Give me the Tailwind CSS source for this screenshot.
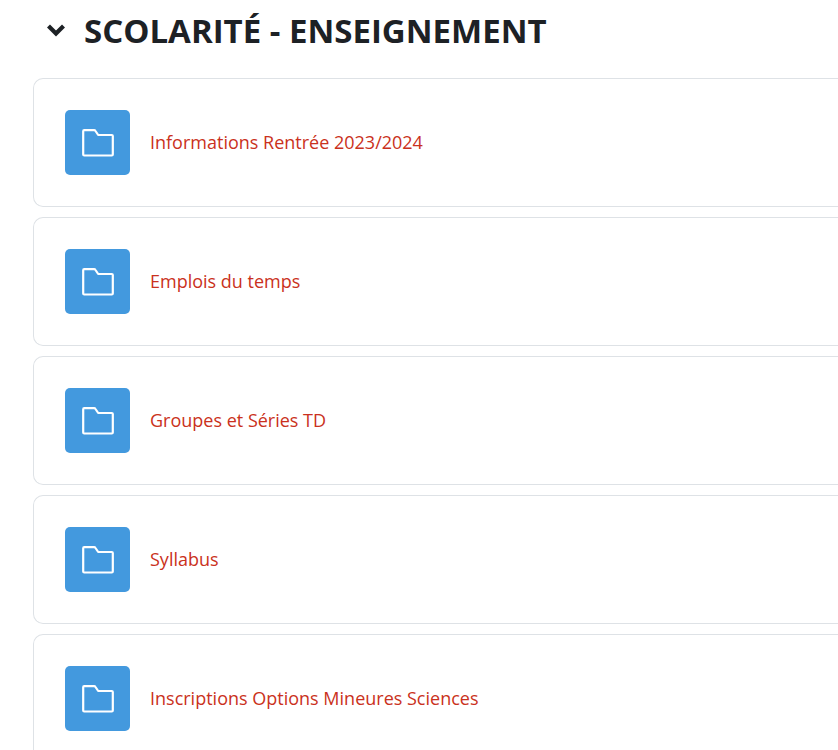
<!DOCTYPE html>
<html lang="fr">
<head>
    <meta charset="UTF-8">
    <meta name="viewport" content="width=device-width, initial-scale=1.0">
    <title>Scolarité - Enseignement</title>
    <script src="https://cdn.jsdelivr.net/npm/@tailwindcss/browser@4"></script>
</head>
<body class="bg-white font-['Segoe_UI','Open_Sans','Noto_Sans',sans-serif] text-[#1d2125]">
    <!-- folder icon shared by every activity -->
    <svg class="hidden" aria-hidden="true">
        <symbol id="folder" viewBox="0 0 32 28">
            <path d="M2.2 1.2h9.8q1 0 1.5.8l2.7 4h13.6q1 0 1 1v18.500q0 1-1 1H2.200q-1 0-1-1V2.200q0-1 1-1z" fill="none" stroke="#fff" stroke-width="2.2" stroke-linejoin="round"/>
        </symbol>
    </svg>

    <main class="pl-[33px]">
        <header class="flex items-center gap-4 pl-[11px] h-[60px] mb-[18px]">
            <button type="button" aria-label="Replier la section" aria-expanded="true" class="w-6 h-6 flex items-center justify-center">
                <svg class="w-5 h-[14px]" viewBox="0 0 20 14" aria-hidden="true">
                    <path d="M2.500 3L10 10.500L17.500 3" fill="none" stroke="#1d2125" stroke-width="4.200"/>
                </svg>
            </button>
            <h1 class="text-[33px] leading-none font-bold whitespace-nowrap">SCOLARITÉ - ENSEIGNEMENT</h1>
        </header>

        <ul class="flex flex-col gap-[10px] text-[18px] text-[#ca3120]">
            <li class="flex items-center gap-5 p-[31px] border border-r-0 border-[#dee2e6] rounded-l-[10px]">
                <span class="w-[65px] h-[65px] shrink-0 rounded-[5px] bg-[#4399de] flex items-center justify-center">
                    <svg class="w-8 h-7"><use href="#folder"/></svg>
                </span>
                <a href="#" class="hover:underline">Informations Rentrée 2023/2024</a>
            </li>
            <li class="flex items-center gap-5 p-[31px] border border-r-0 border-[#dee2e6] rounded-l-[10px]">
                <span class="w-[65px] h-[65px] shrink-0 rounded-[5px] bg-[#4399de] flex items-center justify-center">
                    <svg class="w-8 h-7"><use href="#folder"/></svg>
                </span>
                <a href="#" class="hover:underline">Emplois du temps</a>
            </li>
            <li class="flex items-center gap-5 p-[31px] border border-r-0 border-[#dee2e6] rounded-l-[10px]">
                <span class="w-[65px] h-[65px] shrink-0 rounded-[5px] bg-[#4399de] flex items-center justify-center">
                    <svg class="w-8 h-7"><use href="#folder"/></svg>
                </span>
                <a href="#" class="hover:underline">Groupes et Séries TD</a>
            </li>
            <li class="flex items-center gap-5 p-[31px] border border-r-0 border-[#dee2e6] rounded-l-[10px]">
                <span class="w-[65px] h-[65px] shrink-0 rounded-[5px] bg-[#4399de] flex items-center justify-center">
                    <svg class="w-8 h-7"><use href="#folder"/></svg>
                </span>
                <a href="#" class="hover:underline">Syllabus</a>
            </li>
            <li class="flex items-center gap-5 p-[31px] border border-r-0 border-[#dee2e6] rounded-l-[10px]">
                <span class="w-[65px] h-[65px] shrink-0 rounded-[5px] bg-[#4399de] flex items-center justify-center">
                    <svg class="w-8 h-7"><use href="#folder"/></svg>
                </span>
                <a href="#" class="hover:underline">Inscriptions Options Mineures Sciences</a>
            </li>
        </ul>
    </main>
</body>
</html>
